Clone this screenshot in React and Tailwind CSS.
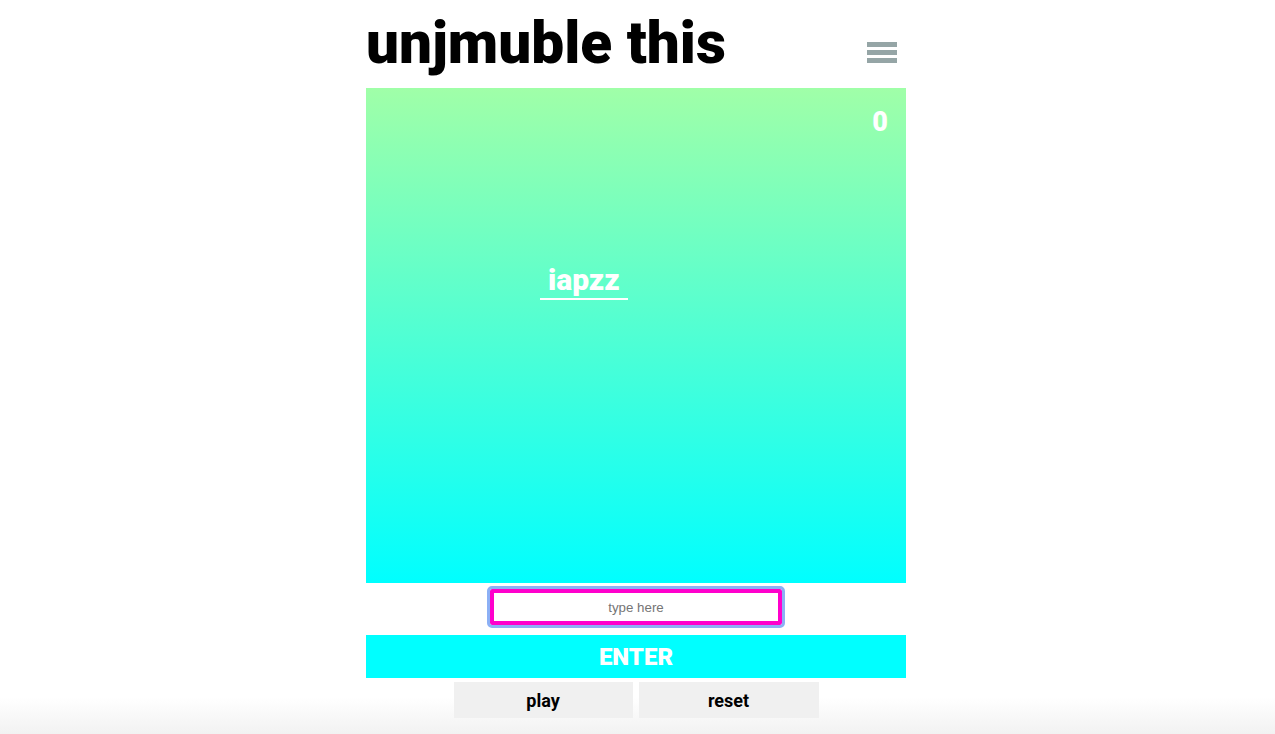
export default function App() {
  return (
    <div className="min-h-[734px] bg-[linear-gradient(to_bottom,#ffffff_0%,#ffffff_95%,#f2f2f2_100%)] font-['Roboto',sans-serif]">
      <div className="w-[543px] pr-[3px] mx-auto">

        <header className="h-[88px] flex items-start justify-between">
          <h1 className="pt-[14px] text-[58.5px] leading-none font-black text-black">
            unjmuble this
          </h1>
          <button className="mt-[42px] mr-[9px] flex flex-col gap-[3px]">
            <span className="block w-[30px] h-[5px] bg-[#95a5a6]" />
            <span className="block w-[30px] h-[5px] bg-[#95a5a6]" />
            <span className="block w-[30px] h-[5px] bg-[#95a5a6]" />
          </button>
        </header>

        <div className="relative h-[495px] bg-[linear-gradient(to_bottom,#a0ffa8,#00ffff)]">
          <span className="absolute top-[21px] right-[18px] text-[27px] leading-none font-black text-white">
            0
          </span>
          <span className="absolute top-[174px] left-[174px] px-[8px] border-b-2 border-white text-[30px] leading-[36px] font-black text-white">
            iapzz
          </span>
        </div>

        <div className="flex justify-center pt-[6px]">
          <input
            placeholder="type here"
            className="w-[292px] h-[36px] border-4 border-[#ff00cc] rounded-[2px] text-center text-[13.33px] font-['Liberation_Sans',sans-serif] text-black placeholder:text-[#757575] outline outline-[3px] outline-[#8cb0f5] outline-offset-0"
          />
        </div>

        <button className="mt-[10px] w-full h-[43px] bg-[#00ffff] text-white text-[24px] font-black leading-none">
          ENTER
        </button>

        <div className="mt-[4px] flex justify-center gap-[6px]">
          <button className="w-[179px] h-[36px] bg-[#f0f0f0] text-[18px] font-bold text-black">
            play
          </button>
          <button className="w-[180px] h-[36px] bg-[#f0f0f0] text-[18px] font-bold text-black">
            reset
          </button>
        </div>

      </div>
    </div>
  );
}
